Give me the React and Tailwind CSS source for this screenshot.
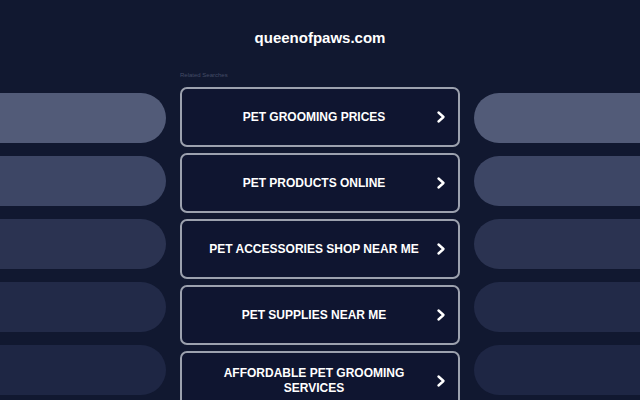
import React from "react";

const searches = [
  "PET GROOMING PRICES",
  "PET PRODUCTS ONLINE",
  "PET ACCESSORIES SHOP NEAR ME",
  "PET SUPPLIES NEAR ME",
  "AFFORDABLE PET GROOMING SERVICES",
];

const pillColors = ["bg-[#525b78]", "bg-[#3d4665]", "bg-[#2b3351]", "bg-[#222a48]", "bg-[#1e2644]"];

const Chevron = () => (
  <svg viewBox="0 0 14 14" className="w-[14px] h-[14px] shrink-0" fill="none">
    <path d="M4.5 2.5 L9.5 7 L4.5 11.5" stroke="white" strokeWidth="2.4" strokeLinecap="round" strokeLinejoin="round" />
  </svg>
);

const SidePills = ({ side }) => (
  <div className="w-[166px] shrink-0 overflow-hidden pt-[22px] flex flex-col gap-[13px]">
    {pillColors.map((c) => (
      <div
        key={c}
        className={
          side === "left"
            ? `h-[50px] w-[300px] ml-[-134px] rounded-full ${c}`
            : `h-[50px] w-[300px] rounded-full ${c}`
        }
      />
    ))}
  </div>
);

export default function App() {
  return (
    <div
      className="h-[400px] overflow-hidden bg-[#111830] text-white"
      style={{ fontFamily: '"Liberation Sans", Arial, sans-serif' }}
    >
      <div className="pt-[29px] text-center text-[15px] leading-[18px] font-bold">queenofpaws.com</div>

      <div className="mt-[24px] flex justify-center gap-[14px]">
        <SidePills side="left" />

        <div className="w-[280px] shrink-0">
          <div className="text-[6px] leading-[8px] text-[#444c66]">Related Searches</div>
          <div className="mt-[8px] flex flex-col gap-[6px]">
            {searches.map((s) => (
              <div
                key={s}
                className="h-[60px] flex items-center pl-[18px] pr-[10px] gap-[6px] rounded-[7px] border-2 border-[#9ca1ae] bg-[#0f1530]"
              >
                <span className="flex-1 text-center text-[12px] leading-[15px] font-bold">{s}</span>
                <Chevron />
              </div>
            ))}
          </div>
        </div>

        <SidePills side="right" />
      </div>
    </div>
  );
}
